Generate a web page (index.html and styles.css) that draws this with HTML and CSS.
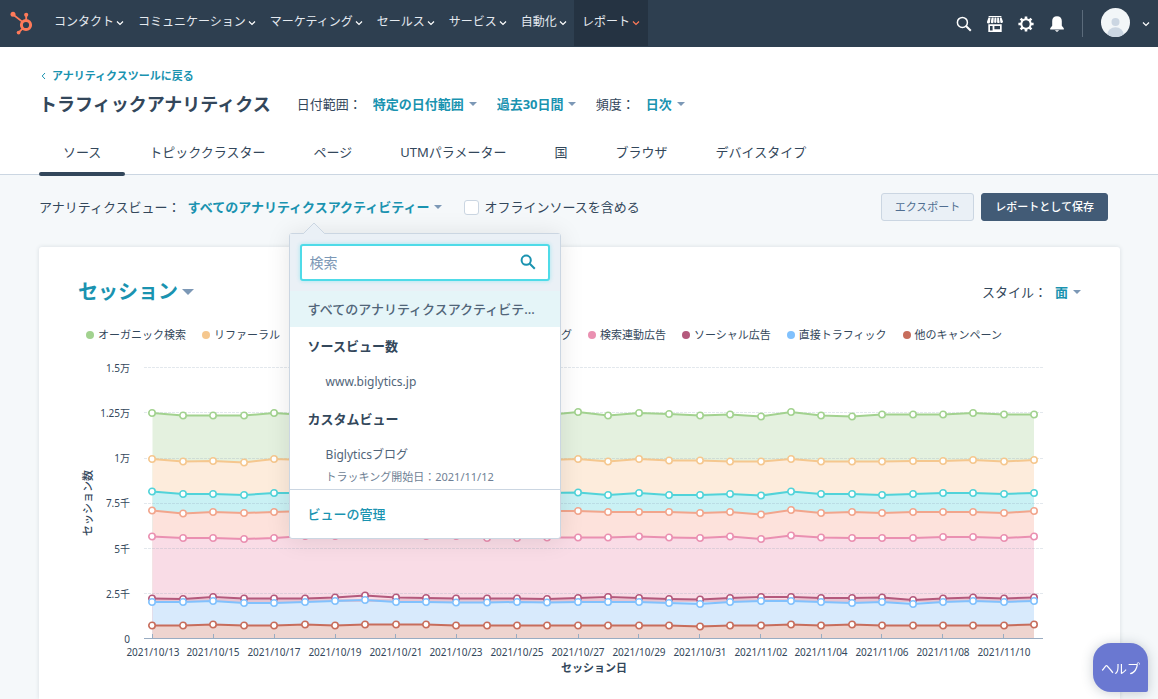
FILE: index.html
```
<!DOCTYPE html>
<html lang="ja">
<head>
<meta charset="utf-8">
<meta name="viewport" content="width=device-width, initial-scale=1">
<title>トラフィックアナリティクス</title>
<link rel="stylesheet" href="styles.css">
</head>
<body>
<nav class="topnav">
  <a class="logo" href="#" aria-label="ホーム">
    <svg width="25" height="26" viewBox="0 0 25 26">
      <g fill="none" stroke="#ff7a59">
        <circle cx="16" cy="15" r="4.6" stroke-width="3"/>
        <path d="M3 4.5l9.5 7.4M16.2 4.5V10M12.6 18.6l-3.8 3.8" stroke-width="1.8"/>
      </g>
      <g fill="#ff7a59"><circle cx="3" cy="4.2" r="2.5"/><circle cx="16.2" cy="4.8" r="2.1"/><circle cx="8.6" cy="22.6" r="1.9"/></g>
    </svg>
  </a>
  <div class="menu">
    <button class="menu-item">コンタクト<svg class="chev" viewBox="0 0 8 6"><path d="M1 1.5l3 3 3-3"/></svg></button>
    <button class="menu-item">コミュニケーション<svg class="chev" viewBox="0 0 8 6"><path d="M1 1.5l3 3 3-3"/></svg></button>
    <button class="menu-item">マーケティング<svg class="chev" viewBox="0 0 8 6"><path d="M1 1.5l3 3 3-3"/></svg></button>
    <button class="menu-item">セールス<svg class="chev" viewBox="0 0 8 6"><path d="M1 1.5l3 3 3-3"/></svg></button>
    <button class="menu-item">サービス<svg class="chev" viewBox="0 0 8 6"><path d="M1 1.5l3 3 3-3"/></svg></button>
    <button class="menu-item">自動化<svg class="chev" viewBox="0 0 8 6"><path d="M1 1.5l3 3 3-3"/></svg></button>
    <button class="menu-item active">レポート<svg class="chev" viewBox="0 0 8 6"><path d="M1 1.5l3 3 3-3"/></svg></button>
  </div>
  <div class="tools">
    <button class="tool" aria-label="検索"><svg width="16" height="16" viewBox="0 0 16 16" fill="none" stroke="#fff"><circle cx="6.4" cy="6.4" r="5" stroke-width="1.5"/><path d="M10 10l4.8 4.8" stroke-width="2"/></svg></button>
    <button class="tool" aria-label="マーケットプレイス"><svg width="16" height="16" viewBox="0 0 16 16" fill="#fff"><path d="M1.6 0h12.8v1H1.6z"/><path d="M1.5 1.5h2L3 6.2a1.4 1.4 0 0 1-3-.4zM4.6 1.5h2.1l-.2 4.7a1.4 1.4 0 0 1-2.7 0zM7.5 1.5h1.9v4.7a1.3 1.3 0 0 1-2.3 0zM10.2 1.5h1.6l.9 4.7a1.4 1.4 0 0 1-2.6 0zM12.7 1.5h1.8l1.5 4.3a1.4 1.4 0 0 1-2.6.6z"/><path fill-rule="evenodd" d="M1.3 8.3h13.4V16H1.3zM3 10v4.6h2.6V10zM7.4 10v3.2h5.6V10z"/></svg></button>
    <button class="tool" aria-label="設定"><svg width="16" height="16" viewBox="0 0 16 16"><circle cx="8" cy="8" r="4.6" fill="none" stroke="#fff" stroke-width="2.2"/><path d="M8 .4v3M8 12.6v3M.4 8h3M12.6 8h3M2.6 2.6l2.1 2.1M11.3 11.3l2.1 2.1M2.6 13.4l2.1-2.1M11.3 4.7l2.1-2.1" stroke="#fff" stroke-width="2.6"/><circle cx="8" cy="8" r="3.4" fill="#2e3f50"/></svg></button>
    <button class="tool" aria-label="通知"><svg width="16" height="16" viewBox="0 0 16 16" fill="#fff"><path d="M8 .2C4.900.2 3.200 2.200 3.200 5v4.800L1.200 12.200v1.200h13.600v-1.200l-2-2.400V5C12.800 2.200 11.100.2 8 .2zM5.800 14.200h4.400L8 16z"/></svg></button>
    <span class="divider"></span>
    <button class="account" aria-label="アカウント">
      <svg width="29" height="29" viewBox="0 0 29 29"><defs><clipPath id="avatar"><circle cx="14.500" cy="14.500" r="14.500"/></clipPath></defs><g clip-path="url(#avatar)"><path fill="#f2f6f8" d="M0 0h29v29H0z"/><circle cx="14.500" cy="14" r="4" fill="#cbd6e2"/><ellipse cx="14.500" cy="27" rx="8.300" ry="7.700" fill="#cbd6e2"/></g></svg>
      <svg class="chev" viewBox="0 0 8 6"><path d="M1 1.5l3 3 3-3"/></svg>
    </button>
  </div>
</nav>

<header class="page-head">
  <a class="back" href="#"><svg width="5" height="8" viewBox="0 0 5 8"><path d="M4 1L1.200 4 4 7"/></svg>アナリティクスツールに戻る</a>
  <div class="title-row">
    <h1>トラフィックアナリティクス</h1>
    <div class="filters">
      <label class="field">日付範囲：<span class="pick"><select><option>特定の日付範囲</option></select></span></label>
      <span class="pick"><select aria-label="期間"><option>過去30日間</option></select></span>
      <label class="field">頻度：<span class="pick"><select><option>日次</option></select></span></label>
    </div>
  </div>
  <div class="tabs">
    <a class="tab current" href="#">ソース</a>
    <a class="tab" href="#">トピッククラスター</a>
    <a class="tab" href="#">ページ</a>
    <a class="tab" href="#">UTMパラメーター</a>
    <a class="tab" href="#">国</a>
    <a class="tab" href="#">ブラウザ</a>
    <a class="tab" href="#">デバイスタイプ</a>
  </div>
</header>

<main class="content">
  <div class="toolbar">
    <span class="view-label">アナリティクスビュー：</span>
    <div class="view">
      <button class="pick view-button" aria-haspopup="true" aria-expanded="true">すべてのアナリティクスアクティビティー</button>
      <div class="popover">
        <svg class="arrow" width="24" height="13" viewBox="0 0 24 13"><path d="M1 12L12 1l11 11v1H1z" fill="#eaf0f6"/><path d="M0 11.500h1.500L12 1l10.500 10.500H24" fill="none" stroke="#cbd6e2"/></svg>
        <div class="search">
          <input type="text" placeholder="検索" aria-label="ビューを検索">
          <svg width="16" height="16" viewBox="0 0 16 16"><circle cx="6.200" cy="6.200" r="4.600"/><path d="M9.800 9.800l5 5"/></svg>
        </div>
        <ul class="options">
          <li class="option selected">すべてのアナリティクスアクティビテ…</li>
          <li class="group">ソースビュー数</li>
          <li class="option nested">www.biglytics.jp</li>
          <li class="group">カスタムビュー</li>
          <li class="option detail">Biglyticsブログ<small>トラッキング開始日：2021/11/12</small></li>
        </ul>
        <a class="manage" href="#">ビューの管理</a>
      </div>
    </div>
    <label class="offline"><input type="checkbox">オフラインソースを含める</label>
    <div class="actions">
      <button class="btn">エクスポート</button>
      <button class="btn primary">レポートとして保存</button>
    </div>
  </div>

  <section class="card">
    <div class="card-head">
      <span class="pick metric"><select aria-label="指標"><option>セッション</option></select></span>
      <label class="field style-field">スタイル：<span class="pick"><select><option>面</option></select></span></label>
    </div>
    <ul class="legend">
      <li class="organic">オーガニック検索</li>
      <li class="referral">リファーラル</li>
      <li class="social">オーガニックソーシャル</li>
      <li class="email">Eメールマーケティング</li>
      <li class="paid">検索連動広告</li>
      <li class="paid-social">ソーシャル広告</li>
      <li class="direct">直接トラフィック</li>
      <li class="other">他のキャンペーン</li>
    </ul>
    <svg class="chart" viewBox="78 356 1003 325" role="img" aria-label="セッション数の推移">
      <defs>
        <marker id="m1" markerUnits="userSpaceOnUse" markerWidth="10" markerHeight="10" refX="5" refY="5"><circle class="dot organic" cx="5" cy="5" r="3.200"/></marker>
        <marker id="m2" markerUnits="userSpaceOnUse" markerWidth="10" markerHeight="10" refX="5" refY="5"><circle class="dot referral" cx="5" cy="5" r="3.200"/></marker>
        <marker id="m3" markerUnits="userSpaceOnUse" markerWidth="10" markerHeight="10" refX="5" refY="5"><circle class="dot social" cx="5" cy="5" r="3.200"/></marker>
        <marker id="m4" markerUnits="userSpaceOnUse" markerWidth="10" markerHeight="10" refX="5" refY="5"><circle class="dot email" cx="5" cy="5" r="3.200"/></marker>
        <marker id="m5" markerUnits="userSpaceOnUse" markerWidth="10" markerHeight="10" refX="5" refY="5"><circle class="dot paid" cx="5" cy="5" r="3.200"/></marker>
        <marker id="m6" markerUnits="userSpaceOnUse" markerWidth="10" markerHeight="10" refX="5" refY="5"><circle class="dot paid-social" cx="5" cy="5" r="3.200"/></marker>
        <marker id="m7" markerUnits="userSpaceOnUse" markerWidth="10" markerHeight="10" refX="5" refY="5"><circle class="dot direct" cx="5" cy="5" r="3.200"/></marker>
        <marker id="m8" markerUnits="userSpaceOnUse" markerWidth="10" markerHeight="10" refX="5" refY="5"><circle class="dot other" cx="5" cy="5" r="3.200"/></marker>
      </defs>
      <g class="areas">
        <path fill="#e4f1df" d="M152.500 639V414L183 416H244L274 413 305 415H548L578 412 608 416 639 413 669 414 700 416 730 415 761 417 791 412 821 416 852 417 882 415H943L973 413 1004 415H1034V639z"/>
        <path fill="#fdecdc" d="M152.500 639V459L183 461H213L244 462 274 459 305 461H548L578 459 608 462 639 459 669 461H700L730 462H761L791 459 821 462H852L882 461H943L973 460 1004 462 1034 460V639z"/>
        <path fill="#caf1f4" d="M152.500 639V491L183 494H213L244 495 274 493 305 494H548L578 492 608 495 639 493 669 495H700L730 494 761 496 791 491 821 494H852L882 495 913 494 943 493H973L1004 494 1034 493V639z"/>
        <path fill="#fde2dc" d="M152.500 639V510L183 514 213 512 244 513 274 512H548L578 511 608 512H669L700 513 730 512 761 515 791 510 821 513 852 512 882 513 913 512H973L1004 513 1034 511V639z"/>
        <path fill="#f9dce6" d="M152.500 639V536L183 538H213L244 539 274 538H548L578 537H608L639 536 669 537 700 538 730 536 761 539 791 535 821 537 852 538H913L943 537H973L1004 538 1034 536V639z"/>
        <path fill="#e5c4d2" d="M152.500 639V599H1034V639z"/>
        <path fill="#d8eafc" d="M152.500 639V602H1034V639z"/>
        <path fill="#eed4cf" d="M152.500 639V625H1034V639z"/>
      </g>
      <path class="grid" d="M144 367.500H1043M144 412.500H1043M144 458.500H1043M144 503.500H1043M144 548.500H1043M144 593.500H1043"/>
      <path class="axis" d="M144 638.500H1043M152.500 634v4M213.500 634v4M274.500 634v4M335.500 634v4M395.500 634v4M456.500 634v4M516.500 634v4M578.500 634v4M638.500 634v4M699.500 634v4M760.500 634v4M821.500 634v4M881.500 634v4M942.500 634v4M1003.500 634v4"/>
      <g class="lines">
        <polyline class="organic" marker-start="url(#m1)" marker-mid="url(#m1)" marker-end="url(#m1)" points="152,413 183,415.500 213,415.500 244,415.500 274,413 305,415 335,414 365,415 396,414 426,415 456,414 487,415 517,414 547,415 578,412 608,415.500 639,413 669,414 700,415.500 730,414.500 761,416.500 791,412 821,415.500 852,416.500 882,414.500 913,414.500 943,414.500 973,413 1004,414.500 1034,414.500"/>
        <polyline class="referral" marker-start="url(#m2)" marker-mid="url(#m2)" marker-end="url(#m2)" points="152,459 183,461.500 213,461 244,462.500 274,459 305,460 335,461 365,461 396,460 426,461 456,461 487,460 517,461 547,460 578,459 608,461.500 639,459 669,460.500 700,460.500 730,461.500 761,461.500 791,459 821,461.500 852,461.500 882,461.500 913,461 943,461 973,460 1004,461.500 1034,460"/>
        <polyline class="social" marker-start="url(#m3)" marker-mid="url(#m3)" marker-end="url(#m3)" points="152,491.500 183,494 213,494 244,495 274,493 305,493 335,494 365,494 396,493 426,494 456,494 487,493 517,494 547,493 578,492.500 608,495 639,493 669,495 700,495 730,494 761,495.500 791,491.500 821,494 852,494 882,495 913,494 943,493 973,493 1004,494 1034,493"/>
        <polyline class="email" marker-start="url(#m4)" marker-mid="url(#m4)" marker-end="url(#m4)" points="152,510.500 183,513.500 213,512 244,513 274,512 305,511 335,512 365,512 396,511 426,512 456,512 487,512 517,511 547,511 578,511 608,512 639,512 669,512 700,513 730,512 761,514.500 791,510 821,513 852,512 882,513 913,512 943,512 973,512 1004,513 1034,511"/>
        <polyline class="paid" marker-start="url(#m5)" marker-mid="url(#m5)" marker-end="url(#m5)" points="152,536.500 183,538 213,538 244,539 274,538 305,536 335,536 365,535 396,535 426,536 456,536 487,538 517,538 547,537.500 578,537.500 608,537.500 639,536.500 669,537.500 700,538 730,536.500 761,539 791,535.500 821,537.500 852,538 882,538 913,538 943,537 973,537 1004,538 1034,536.500"/>
        <polyline class="paid-social" marker-start="url(#m6)" marker-mid="url(#m6)" marker-end="url(#m6)" points="152,598.500 183,599 213,597 244,598.500 274,598.500 305,598.500 335,597.500 365,595.500 396,597.500 426,598 456,598.500 487,598.500 517,598.500 547,599 578,598 608,597 639,598 669,599 700,599.500 730,598 761,597 791,597 821,598 852,598 882,597.500 913,600 943,598.500 973,597.500 1004,598.500 1034,597.500"/>
        <polyline class="direct" marker-start="url(#m7)" marker-mid="url(#m7)" marker-end="url(#m7)" points="152,602 183,602 213,601 244,603 274,603 305,602 335,601 365,600 396,602 426,602 456,602.500 487,602.500 517,602 547,602.500 578,602 608,602 639,602 669,603 700,604 730,602 761,601 791,601 821,602 852,603 882,602 913,604 943,602 973,601 1004,602 1034,601"/>
        <polyline class="other" marker-start="url(#m8)" marker-mid="url(#m8)" marker-end="url(#m8)" points="152,625.500 183,625.500 213,624.500 244,625.500 274,625.500 305,624.500 335,625.500 365,624.500 396,624.500 426,624.500 456,625.500 487,625.500 517,625.500 547,625.500 578,625.500 608,625.500 639,625.500 669,625.500 700,626.500 730,625.500 761,625.500 791,624.500 821,625.500 852,624.500 882,625.500 913,625.500 943,625.500 973,625.500 1004,625.500 1034,624.500"/>
      </g>
      <g class="y-labels">
        <text x="130" y="372">1.5万</text><text x="130" y="417">1.25万</text><text x="130" y="462">1万</text><text x="130" y="507">7.5千</text><text x="130" y="553">5千</text><text x="130" y="598">2.5千</text><text x="130" y="643">0</text>
      </g>
      <g class="x-labels">
        <text x="153" y="656">2021/10/13</text><text x="213" y="656">2021/10/15</text><text x="274" y="656">2021/10/17</text><text x="335" y="656">2021/10/19</text><text x="396" y="656">2021/10/21</text><text x="456" y="656">2021/10/23</text><text x="517" y="656">2021/10/25</text><text x="578" y="656">2021/10/27</text><text x="639" y="656">2021/10/29</text><text x="700" y="656">2021/10/31</text><text x="761" y="656">2021/11/02</text><text x="821" y="656">2021/11/04</text><text x="882" y="656">2021/11/06</text><text x="943" y="656">2021/11/08</text><text x="1004" y="656">2021/11/10</text>
      </g>
      <text class="axis-title" x="594" y="672">セッション日</text>
      <text class="axis-title side" transform="translate(92 503) rotate(-90)">セッション数</text>
    </svg>
  </section>
</main>
<button class="help">ヘルプ</button>
</body>
</html>
```

FILE: styles.css
```
* { box-sizing: border-box; }
body {
  margin: 0;
  min-height: 100vh;
  display: flex;
  flex-direction: column;
  background: #f5f8fa;
  color: #33475b;
  font: 13px/20px "Noto Sans", "Noto Sans CJK JP", sans-serif;
}
button, select, input { font: inherit; color: inherit; }
button { border: 0; padding: 0; background: none; cursor: pointer; white-space: nowrap; }
a { color: inherit; text-decoration: none; }
ul { list-style: none; margin: 0; padding: 0; }
svg { display: block; flex: none; }

/* Top navigation */
.topnav {
  display: flex;
  height: 47px;
  padding: 0 8px 0 10px;
  background: #2e3f50;
  color: #fff;
}
.logo { width: 37px; padding-top: 10px; }
.menu { display: flex; height: 46px; }
.menu-item {
  display: flex;
  align-items: center;
  gap: 2px;
  padding: 0 7px 2px;
  font-size: 12px;
  color: #e5eaf0;
}
.menu-item.active { padding: 0 8px 2px; background: #253342; }
.chev { width: 8px; height: 6px; margin-top: 2px; fill: none; stroke: #fff; stroke-width: 1.2; }
.active .chev { stroke: #ff7a59; }
.tools { display: flex; align-items: center; gap: 15px; margin-left: auto; }
.divider { width: 1px; height: 27px; margin-left: 2px; background: #5b6b7b; }
.account { display: flex; align-items: center; gap: 12px; margin-left: 3px; padding-bottom: 2px; }

/* Page header */
.page-head {
  padding: 21px 38px 0 39px;
  background: #fff;
  border-bottom: 1px solid #cbd6e2;
}
.back {
  display: flex;
  align-items: center;
  gap: 6px;
  width: fit-content;
  padding-left: 2px;
  font-size: 11px;
  line-height: 16px;
  font-weight: 700;
  color: #1a93b0;
}
.back svg { fill: none; stroke: #1a93b0; }
.title-row { display: flex; align-items: center; gap: 26px; height: 28px; margin-top: 6px; }
h1 { margin: 0; font-size: 18px; line-height: 28px; white-space: nowrap; }
.filters { display: flex; align-items: center; gap: 20px; }
.field { display: flex; align-items: center; gap: 11px; white-space: nowrap; }
.pick {
  display: inline-flex;
  align-items: center;
  gap: 4px;
  color: #1a93b0;
  font-weight: 700;
}
.pick::after {
  content: "";
  border: 4px solid transparent;
  border-top-color: #7c98b6;
  border-bottom: 0;
}
.pick select {
  appearance: none;
  border: 0;
  padding: 0;
  background: none;
  font-weight: 700;
  line-height: 20px;
}
.tabs { display: flex; margin-top: 12px; }
.tab { position: relative; padding: 12px 24px; white-space: nowrap; }
.tab.current::after {
  content: "";
  position: absolute;
  left: 0;
  right: 0;
  bottom: -2px;
  height: 4px;
  border-radius: 2px;
  background: #33475b;
}

/* Toolbar */
.content { flex: 1; display: flex; flex-direction: column; padding: 18px 38px 0 39px; }
.toolbar { display: flex; align-items: center; height: 28px; padding-right: 12px; }
.view-label { margin-right: 7px; }
.view { position: relative; display: flex; }
.offline { display: flex; align-items: center; gap: 6px; margin-left: 22px; white-space: nowrap; }
.offline input {
  appearance: none;
  width: 15px;
  height: 15px;
  margin: 0;
  border: 1px solid #cbd6e2;
  border-radius: 3px;
  background: #fff;
}
.actions { display: flex; gap: 7px; margin-left: auto; }
.btn {
  height: 28px;
  padding: 0 13px;
  border: 1px solid #cbd6e2;
  border-radius: 3px;
  background: #eaf0f6;
  color: #506e91;
  font-size: 11px;
}
.btn.primary { border-color: #425b76; background: #425b76; color: #fff; font-weight: 500; }

/* View picker */
.popover {
  position: absolute;
  z-index: 2;
  top: 36px;
  left: 101px;
  width: 272px;
  border: 1px solid #cbd6e2;
  border-radius: 3px;
  background: #fff;
  box-shadow: 0 1px 24px rgba(0, 0, 0, .1);
}
.arrow { position: absolute; left: 12px; top: -12px; }
.search { position: relative; padding: 10px; background: #eaf0f6; }
.search input {
  display: block;
  width: 100%;
  height: 37px;
  padding: 0 40px 0 8px;
  border: 2px solid #4fdbe8;
  border-radius: 3px;
  outline: 0;
  background: #fff;
  box-shadow: 0 0 4px rgba(0, 208, 228, .3);
  font-size: 14px;
}
.search input::placeholder { color: #7c98b6; opacity: 1; }
.search svg { position: absolute; right: 24px; top: 20px; fill: none; stroke: #1a93b0; stroke-width: 2; }
.option { padding: 8px 18px; white-space: nowrap; color: #516579; }
.group { padding: 9px 18px 8px; font-weight: 700; }
.selected { background: #e5f5f8; font-weight: 500; }
.nested { padding-left: 36px; font-size: 12px; }
.detail { padding: 8px 18px 4px 36px; font-size: 12px; }
.detail small { display: block; margin-top: 4px; font-size: 11px; line-height: 16px; color: #6f7f95; }
.manage {
  display: block;
  padding: 14px 18px;
  border-top: 1px solid #cbd6e2;
  color: #1a93b0;
  font-weight: 500;
}

/* Chart card */
.card {
  flex: 1;
  margin-top: 26px;
  padding: 31px 39px 0;
  border-radius: 3px 3px 0 0;
  background: #fff;
  box-shadow: 0 0 4px rgba(45, 62, 80, .14);
}
.card-head { display: flex; align-items: center; justify-content: space-between; height: 28px; }
.style-field { gap: 8px; }
.metric { gap: 4px; font-size: 20px; }
.metric select { line-height: 28px; }
.metric::after { border-width: 6px 6px 0; }
.legend {
  display: flex;
  gap: 16px;
  margin: 21px 0 13px;
  padding-left: 8px;
  font-size: 11px;
  line-height: 16px;
  white-space: nowrap;
}
.legend li { display: flex; align-items: center; gap: 4px; }
.legend li::before { content: ""; width: 8px; height: 8px; border-radius: 50%; background: var(--series); }
.organic { --series: #a2d28f; }
.referral { --series: #f5c78e; }
.social { --series: #51d3d9; }
.email { --series: #f2a58c; }
.paid { --series: #ea90b1; }
.paid-social { --series: #b4597c; }
.direct { --series: #81c1fd; }
.other { --series: #c76d5c; }

.chart { width: 100%; height: auto; }
.grid { fill: none; stroke: #8fa3b8; stroke-opacity: .25; stroke-dasharray: 3 1; }
.axis { fill: none; stroke: #99acc2; }
.lines polyline { fill: none; stroke: var(--series); stroke-width: 2; }
.dot { fill: #fff; stroke: var(--series); stroke-width: 1.6; }
.chart text { fill: #33475b; font-size: 10px; text-anchor: middle; }
.chart .y-labels text { text-anchor: end; }
.chart .axis-title { font-size: 11px; font-weight: 700; }
.chart .side { font-weight: 500; }

.help {
  position: fixed;
  right: 10px;
  bottom: 7px;
  width: 55px;
  height: 49px;
  border-radius: 18px 18px 2px 18px;
  background: #6a78d1;
  box-shadow: 0 1px 12px rgba(45, 62, 80, .25);
  color: #fff;
}
```
